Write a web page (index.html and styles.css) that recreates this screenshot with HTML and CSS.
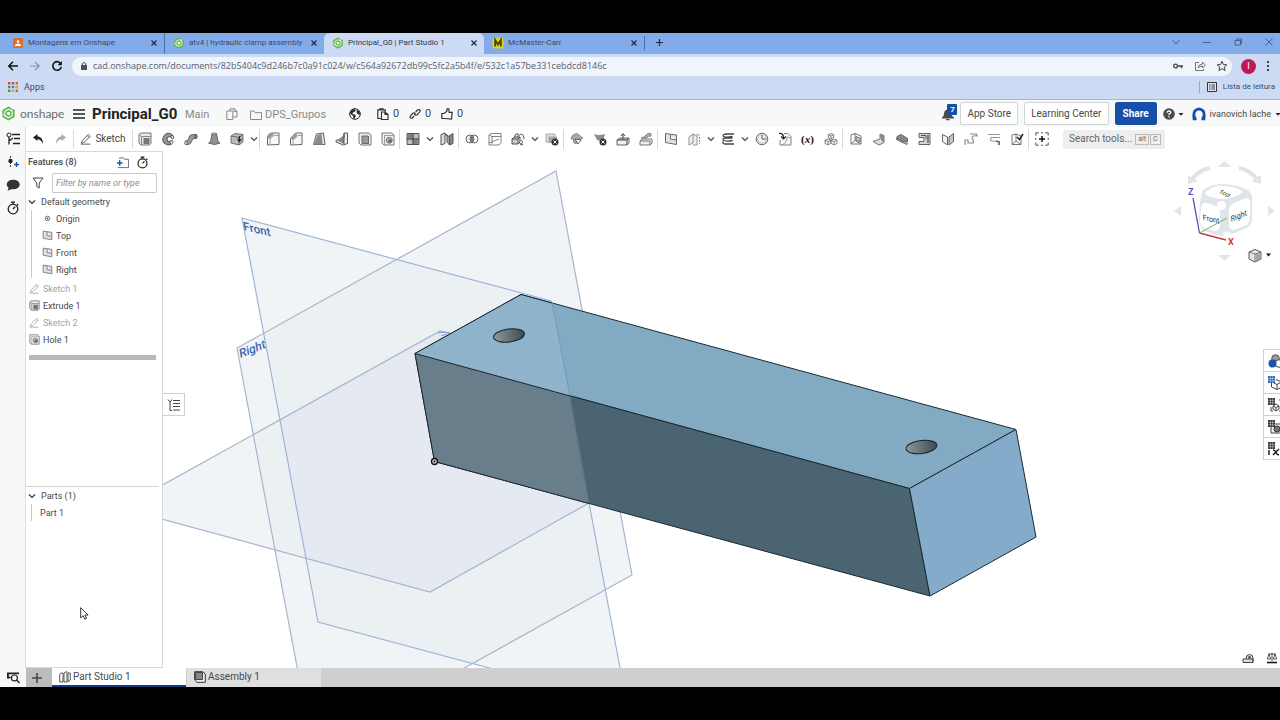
FILE: index.html
```html
<!DOCTYPE html>
<html lang="en">
<head>
<meta charset="utf-8">
<title>Principal_G0 | Part Studio 1</title>
<link rel="stylesheet" href="styles.css">
</head>
<body>
<svg class="defs" aria-hidden="true">
  <defs>
    <linearGradient id="hole" x1="0" y1="0" x2="1" y2="0"><stop offset="0" stop-color="#8f9899"/><stop offset="1" stop-color="#3c4a50"/></linearGradient>
    <clipPath id="inRight"><path d="M556 171 632 575 313 752 237 348z"/></clipPath>
    <clipPath id="inFront"><path d="M242 218 551 301 627 705 318 622z"/></clipPath>
    <symbol id="logo" viewBox="0 0 16 16"><path d="M8 .5 14.500 4.200v7.600L8 15.500 1.500 11.800V4.200z" fill="#5cb548"/><path d="M8 3.400 12 5.700v4.600L8 12.600 4 10.300V5.700z" fill="none" stroke="#fff" stroke-width="1.100"/><path d="M8 6 9.800 7v2L8 10 6.200 9V7z" fill="#fff"/><path d="M1.500 9 7 12.300M11.500 2v4" stroke="#fff" stroke-width=".8"/></symbol>
    <symbol id="close" viewBox="0 0 8 8"><path d="M1.500 1.500l5 5M6.500 1.500l-5 5" stroke="currentColor" stroke-width="1.200" fill="none"/></symbol>
    <symbol id="chev" viewBox="0 0 8 8"><path d="M1 2.500 4 5.500 7 2.500" stroke="currentColor" stroke-width="1.200" fill="none"/></symbol>
    <symbol id="caret" viewBox="0 0 8 8"><path d="M1.500 3h5L4 5.800z" fill="currentColor"/></symbol>
    <symbol id="pencil" viewBox="0 0 14 14"><path d="M1.500 12 3 8.500 9.800 1.500 12 3.700 5 10.800zM8.400 3l2.200 2.200M1 13h11" fill="none" stroke="currentColor"/></symbol>
    <symbol id="plane" viewBox="0 0 14 14"><path d="M1.500 1.500 12.500 3v9.500L1.500 10.500z" fill="#dfe1e3" stroke="#6b6b6b"/><path d="M6.500 2.500v4.700l6 .8" fill="#f4f4f4" stroke="#6b6b6b"/></symbol>
    <symbol id="extrude" viewBox="0 0 14 14"><path d="M1 2.500 2.500 1H13v10.500L11.500 13H3L1 11z" fill="#e8e8e8" stroke="#777"/><path d="M1 2.500 3.500 4.500H13M3.500 4.500V13" fill="none" stroke="#888"/><path d="M5.500 6h6v6h-6z" fill="#777"/></symbol>
    <symbol id="holeicon" viewBox="0 0 14 14"><path d="M1 1h10l2 2v10H3L1 11z" fill="#f2f2f2" stroke="#777"/><path d="M3.500 3.500V13M3.500 3.500H13" stroke="#888" stroke-width=".8"/><circle cx="8.300" cy="8.300" r="3" fill="#b5b5b5" stroke="#777"/><circle cx="9" cy="9" r="1.800" fill="#666"/></symbol>
    <symbol id="stopwatch" viewBox="0 0 14 14"><circle cx="7" cy="8" r="4.800" fill="none" stroke="currentColor" stroke-width="1.300"/><path d="M5 1.200h4M7 1v2M11 3l1.200 1.200M7 8l2.200-2.200" fill="none" stroke="currentColor" stroke-width="1.300"/></symbol>
    <symbol id="grid" viewBox="0 0 8 8"><path d="M0 0h7v7H0z" fill="currentColor"/><path d="M0 2.400h7M0 4.700h7M2.400 0v7M4.700 0v7" stroke="#fff" stroke-width=".4"/></symbol>
  </defs>
</svg>

<div class="browser">
  <nav class="tabstrip" aria-label="Browser tabs">
    <div class="btab"><svg class="fav" viewBox="0 0 12 12"><rect x="1" y="1" width="10" height="10" rx="1.500" fill="#d9702b"/><circle cx="6" cy="4.500" r="1.300" fill="#fff"/><path d="M3 9V8q3-3 6 0v1z" fill="#fff"/></svg><button class="btab-name">Montagens em Onshape</button><button class="x" aria-label="Close tab"><svg><use href="#close"/></svg></button></div>
    <div class="btab rule"><svg class="fav"><use href="#logo"/></svg><button class="btab-name">atv4 | hydraulic clamp assembly</button><button class="x" aria-label="Close tab"><svg><use href="#close"/></svg></button></div>
    <div class="btab current"><svg class="fav"><use href="#logo"/></svg><button class="btab-name">Principal_G0 | Part Studio 1</button><button class="x" aria-label="Close tab"><svg><use href="#close"/></svg></button></div>
    <div class="btab"><svg class="fav" viewBox="0 0 12 12"><rect x=".5" y=".5" width="11" height="11" rx="2" fill="#e3d21e"/><path d="M3.200 9.500V3L6 7.500 8.800 3v6.500" fill="none" stroke="#3c4a10" stroke-width="1.900"/></svg><button class="btab-name">McMaster-Carr</button><button class="x" aria-label="Close tab"><svg><use href="#close"/></svg></button></div>
    <button class="newtab" aria-label="New tab"><svg viewBox="0 0 10 10"><path d="M5 1v8M1 5h8" stroke="#1d2b45" stroke-width="1.300"/></svg></button>
    <div class="winctl">
      <button aria-label="Search tabs"><svg viewBox="0 0 10 10"><path d="M1.500 3 5 7l3.500-4" /></svg></button>
      <button aria-label="Minimise"><svg viewBox="0 0 10 10"><path d="M1 5.500h8"/></svg></button>
      <button aria-label="Restore"><svg viewBox="0 0 10 10"><path d="M2 3.500h5.500V8H2zM3.500 3.500V2h5v4.500h-1"/></svg></button>
      <button aria-label="Close"><svg viewBox="0 0 10 10"><path d="M1.500 1.500l7 7M8.500 1.500l-7 7"/></svg></button>
    </div>
  </nav>
  <div class="address">
    <button aria-label="Back"><svg viewBox="0 0 12 12"><path d="M11 6H2M6 1.800 1.800 6 6 10.200" fill="none" stroke="#111" stroke-width="1.500"/></svg></button>
    <button aria-label="Forward"><svg viewBox="0 0 12 12"><path d="M1 6h9M6 1.800 10.200 6 6 10.200" fill="none" stroke="#8391a8" stroke-width="1.200"/></svg></button>
    <button aria-label="Reload"><svg viewBox="0 0 12 12"><path d="M10 4A4.300 4.300 0 1 0 10.300 7" fill="none" stroke="#111" stroke-width="1.600"/><path d="M10.800 1v4.200H6.600z" fill="#111"/></svg></button>
    <div class="omnibox">
      <svg class="lock" viewBox="0 0 8 10"><path d="M1 4h6v5H1z" fill="#4a505c"/><path d="M2.300 4V2.500q1.700-2 3.400 0V4" fill="none" stroke="#4a505c"/></svg>
      <input class="url" aria-label="Address" value="cad.onshape.com/documents/82b5404c9d246b7c0a91c024/w/c564a92672db99c5fc2a5b4f/e/532c1a57be331cebdcd8146c">
      <button aria-label="Passwords"><svg viewBox="0 0 12 12"><circle cx="3.500" cy="6" r="1.900" fill="none" stroke="#444" stroke-width="1.300"/><path d="M5.500 6H11M9.500 6v2.300" stroke="#444" stroke-width="1.400"/></svg></button>
      <button aria-label="Share page"><svg viewBox="0 0 12 12"><path d="M5 2.500H1.500v8h8V9M4 8q.5-4 4.500-4V2l2.700 3L8.500 8V6Q6 5.800 4 8z" fill="none" stroke="#666" stroke-width=".9"/></svg></button>
      <button aria-label="Bookmark"><svg viewBox="0 0 12 12"><path d="M6 1.200 7.400 4.500l3.500.3-2.700 2.300.9 3.500L6 8.700l-3.100 1.900.9-3.500L1.100 4.800l3.500-.3z" fill="none" stroke="#444"/></svg></button>
    </div>
    <button class="profile" aria-label="Profile">I</button>
    <button class="dots" aria-label="Menu"><svg viewBox="0 0 4 12"><circle cx="2" cy="2" r="1.100"/><circle cx="2" cy="6" r="1.100"/><circle cx="2" cy="10" r="1.100"/></svg></button>
  </div>
  <div class="bookmarks">
    <a href="#apps"><svg viewBox="0 0 10 10"><path d="M0 0h2.400v2.400H0zM3.800 0h2.400v2.400H3.800z" fill="#d4483c"/><path d="M7.600 0H10v2.400H7.600zM7.600 7.600H10V10H7.600z" fill="#cc6a35"/><path d="M0 3.800h2.400v2.400H0z" fill="#45935a"/><path d="M3.800 3.800h2.400v2.400H3.800z" fill="#3e78d0"/><path d="M7.600 3.800H10v2.400H7.600zM3.800 7.600h2.400V10H3.800z" fill="#d8a728"/><path d="M0 7.600h2.400V10H0z" fill="#45935a"/></svg>Apps</a>
    <a href="#list" class="reading"><svg viewBox="0 0 10 10"><path d="M.5.5h9v9h-9z" fill="#e0e8f5" stroke="#333"/><path d="M2 3h1.500M4.500 3H8M2 5h1.500M4.500 5H8M2 7h1.500M4.500 7H8" stroke="#333"/></svg>Lista de leitura</a>
  </div>
</div>

<header class="appbar">
  <a class="brand" href="#home"><svg><use href="#logo"/></svg>onshape</a>
  <button class="menu" aria-label="Menu"><svg viewBox="0 0 12 12"><path d="M0 2h12M0 6h12M0 10h12" stroke="#222" stroke-width="1.700"/></svg></button>
  <h1>Principal_G0</h1>
  <span class="branch">Main</span>
  <button class="copy" aria-label="Copy"><svg viewBox="0 0 12 12"><path d="M.8 3h6v8.500h-6zM4 3V.8h4.500L11 3.300V9H7M8.200 1v2.600H11" fill="none" stroke="#888"/></svg></button>
  <a class="folder" href="#folder"><svg viewBox="0 0 12 12"><path d="M.5 10.500v-8.500H4l1.200 1.700h6.300v6.800z" fill="none" stroke="#888"/></svg>DPS_Grupos</a>
  <svg class="globe" viewBox="0 0 12 12"><circle cx="6" cy="6" r="5.300" fill="#fff" stroke="#222"/><path d="M1 4Q2 1 5 .8l2 1.400L5.500 4 4 4.500 3.300 6l2.700.6.900 1.200L5.500 11 4 9.500V8L1 5.500zM8 1.500 10.500 3.500l.8 3L10 6.800 8 5.500 7.500 4z" fill="#333"/></svg>
  <span class="stat"><svg viewBox="0 0 12 12"><path d="M4 10.500H.8V1.800h7.400V4M2.800 2.500V.8h3.300v1.700M4.500 4H8l3 2.500v5H4.500zM8 4v2.500h3" fill="none" stroke="#333" stroke-width="1.200"/></svg>0</span>
  <span class="stat"><svg viewBox="0 0 12 12"><path d="M5.200 7.800 3.500 9.900Q1.500 11 1 8.800L3.600 5.400Q5.400 4 6.600 6M6.600 4.200 8.400 2Q10.500.8 11.200 3L8.500 6.500Q6.500 8 5.300 6" fill="none" stroke="#333" stroke-width="1.200"/></svg>0</span>
  <span class="stat"><svg viewBox="0 0 12 12"><path d="M.8 5.500h2.500L6 3V.8h1.800l.4 3.500h3L10.500 11 4 10.500H.8z" fill="none" stroke="#333" stroke-width="1.200"/></svg>0</span>
  <div class="account">
    <button class="bell" aria-label="Notifications"><svg viewBox="0 0 14 14"><path d="M1 11q2-1 2-4 .5-4 4-4 3 0 3.500 4 0 3 2.500 4v1H1zM5 12.500h3.500v1.200H5z" fill="#4a4a4a"/></svg><span>7</span></button>
    <button class="btn">App Store</button>
    <button class="btn">Learning Center</button>
    <button class="btn share">Share</button>
    <button class="help" aria-label="Help"><svg viewBox="0 0 12 12"><circle cx="6" cy="6" r="5.800" fill="#4b4b4b"/><path d="M4.200 4.800Q4.300 3 6 3t1.800 1.500Q7.800 5.500 6 6.200v1M6 8.200v1.300" fill="none" stroke="#fff" stroke-width="1.300"/></svg><svg class="car"><use href="#caret"/></svg></button>
    <button class="user"><svg viewBox="0 0 16 16"><path d="M1 15Q-.500 7 2 3.500 8-2.500 14 3.500 16.500 7 15 15h-4q-.5-1.500-.2-2.500Q12.500 11 12.200 8 12 4 8 4T3.800 8q-.3 3 1.400 4.500Q5.500 13.500 5 15z" fill="#1650a5"/></svg>ivanovich lache<svg class="car"><use href="#caret"/></svg></button>
  </div>
</header>

<div class="work">
  <aside class="rail">
    <button aria-label="Feature list"><svg viewBox="0 0 14 14"><circle cx="3" cy="3" r="2" fill="none" stroke="#222"/><path d="M3 5v7.500M3 9l4-3M6 2.500h8M8 6.500h6M7 11.500h7" fill="none" stroke="#222" stroke-width="1.300"/></svg></button>
    <button aria-label="Insert"><svg viewBox="0 0 14 14"><path d="M4.500 1v12" stroke="#444" stroke-dasharray="2 1"/><circle cx="4.500" cy="6" r="2.200" fill="#222"/><path d="M8 9.500h5M10.500 7v5" stroke="#1a4fa8" stroke-width="1.400"/></svg></button>
    <button aria-label="Comments"><svg viewBox="0 0 14 14"><ellipse cx="7.200" cy="6.500" rx="6.500" ry="4.800" fill="#333"/><path d="M3 9 1.500 12.800 7 10.500z" fill="#333"/></svg></button>
    <button aria-label="History"><svg><use href="#stopwatch"/></svg></button>
  </aside>

  <div class="main">
    <div class="toolbar" role="toolbar">
      <button class="t" aria-label="Undo"><svg viewBox="0 0 14 14"><path d="M2 5.500 6.500 2v2.300Q12 5 12 12 10 7.500 6.500 7.300V9z" fill="#222"/></svg></button>
      <button class="t" aria-label="Redo"><svg viewBox="0 0 14 14"><path d="M12 5.500 7.500 2v2.300Q2 5 2 12 4 7.500 7.500 7.300V9z" fill="#aaa"/></svg></button>
      <button class="sketch"><svg><use href="#pencil"/></svg>Sketch</button>
      <div class="g">
        <button class="t"><svg><use href="#extrude"/></svg></button>
        <button class="t"><svg viewBox="0 0 14 14"><path d="M12 3.500Q8-.500 4 2.500 0 7 3 11q3 3 7 1.500L8.500 9.500Q6 10 6 7t3-2z" fill="#969696" stroke="#555"/><path d="M9.500 4.200 12 3.500l1 2.500-2 1zM8.500 9l3-.5.500 2-2 2z" fill="#eee" stroke="#444" stroke-width=".8"/></svg></button>
        <button class="t"><svg viewBox="0 0 14 14"><path d="M1.500 9Q4 9.500 4.500 6.500 5 2.500 9 2.500h3.500v4H10q-1.500 0-2 2Q7 13 2 12.700z" fill="#9a9a9a" stroke="#666"/><ellipse cx="2" cy="10.800" rx="1.300" ry="1.900" fill="#ddd" stroke="#555" stroke-width=".8"/><ellipse cx="12" cy="4.500" rx="1.200" ry="2" fill="#888" stroke="#555" stroke-width=".8"/></svg></button>
        <button class="t"><svg viewBox="0 0 14 14"><path d="M5 1.500h4.500l1.500 8L13 11q-5 3-11.500 0L3.700 9.500z" fill="#929292" stroke="#666"/><ellipse cx="7.200" cy="2" rx="2.300" ry="1" fill="#ccc" stroke="#555" stroke-width=".7"/></svg></button>
        <button class="t"><svg viewBox="0 0 14 14"><path d="M1 4 5 1.500l8 1v7.500L9 13l-8-2z" fill="#bbb" stroke="#555" stroke-width=".8"/><path d="M1 4l8 1.500L13 2.500M9 5.500V13" fill="none" stroke="#555" stroke-width=".8"/><path d="M9.500 4v5M7.500 7l2 2.500 2-2.500" fill="none" stroke="#222" stroke-width="1.200"/></svg></button><button class="c"><svg><use href="#chev"/></svg></button>
      </div>
      <div class="g">
        <button class="t"><svg viewBox="0 0 14 14"><path d="M1.500 13V5.500q.5-4 4-4.500H13v11.500z" fill="#f8f8f8" stroke="#666"/><path d="M4 12.500V8q.5-4 4.500-4.500H13" fill="none" stroke="#888" stroke-width=".8"/><path d="M1.500 6q.5-4.500 5-5L8 3Q4.500 4 4 7z" fill="#999"/></svg></button>
        <button class="t"><svg viewBox="0 0 14 14"><path d="M1.500 13V6.500L6.500 1H13v11.500z" fill="#f8f8f8" stroke="#666"/><path d="M1.500 6.500 6.500 1 8.500 3.200 4 8z" fill="#999"/><path d="M4 12.500v-4l5-5h4" fill="none" stroke="#888" stroke-width=".8"/></svg></button>
        <button class="t"><svg viewBox="0 0 14 14"><path d="M1.500 12.500 4.500 2l7-1 1.500 11.500z" fill="#e4e4e4" stroke="#666"/><path d="M2 12.500 5.500 3 9.500 2l1 10.500z" fill="#8a8a8a"/></svg></button>
        <button class="t"><svg viewBox="0 0 14 14"><path d="M1 8.500 9 6V1h3.500v10.500l-4 1.500-7.500-3z" fill="#eee" stroke="#555"/><path d="M2 8.500 9 3v9z" fill="#888"/><path d="M9 1v11" stroke="#555"/></svg></button>
        <button class="t"><svg viewBox="0 0 14 14"><path d="M1 1h10l2 2v10H3l-2-2z" fill="#f0f0f0" stroke="#777"/><path d="M4 4h6.500v7.500H4z" fill="#999" stroke="#666"/></svg></button>
        <button class="t"><svg><use href="#holeicon"/></svg></button>
      </div>
      <div class="g">
        <button class="t"><svg viewBox="0 0 14 14"><path d="M1 1.500h12v11H1z" fill="#bdbdbd" stroke="#555"/><path d="M1.500 2h5v4.500h-5zM7.500 7.500h5V12h-5z" fill="#828282"/><path d="M7 1.500v11M1 7h12" stroke="#333"/></svg></button><button class="c"><svg><use href="#chev"/></svg></button>
        <button class="t"><svg viewBox="0 0 14 14"><path d="M1 2.500 5 1v10.500L1 13z" fill="#ddd" stroke="#555"/><path d="M9.500 3.500 13 1.500v10L9.500 13z" fill="#888" stroke="#555"/><path d="M5 1.500 7 4v6l2.500 3V5L5 1.500z" fill="#aaa" stroke="#555"/></svg></button>
      </div>
      <div class="g">
        <button class="t"><svg viewBox="0 0 14 14"><circle cx="5" cy="7" r="4" fill="#eee" stroke="#555" stroke-width=".9"/><circle cx="9" cy="7" r="4" fill="none" stroke="#555" stroke-width=".9"/><path d="M7 3.600a4 4 0 0 1 0 6.800 4 4 0 0 1 0-6.800z" fill="#777"/></svg></button>
        <button class="t"><svg viewBox="0 0 14 14"><path d="M1 3 3 1.500h10v9L11 13H1zM1 3l3 1.500h9M1 11l10-4M4 4.500V12" fill="none" stroke="#777" stroke-width=".9"/></svg></button>
        <button class="t"><svg viewBox="0 0 14 14"><path d="M1 7h6v5H1zM1 7l2-2h6L7 7M9 5v5l-2 2" fill="#ccc" stroke="#444" stroke-width=".9"/><path d="M4 5V3l3-1.500V5M8 3.500Q11 .5 12.500 4l.5 3M10 8q3 1 0 4.500M9 11l1 2 2-.5" fill="none" stroke="#444" stroke-width=".9"/></svg></button><button class="c"><svg><use href="#chev"/></svg></button>
        <button class="t"><svg viewBox="0 0 14 14"><path d="M1 2h9v8H1z" fill="#ddd" stroke="#aaa"/><path d="M3.500 4.500H12V11H3.500z" fill="#a5a5a5"/><circle cx="10" cy="10" r="3.500" fill="#333"/><path d="M8.500 8.500l3 3m0-3l-3 3" stroke="#fff"/></svg></button>
      </div>
      <div class="g">
        <button class="t"><svg viewBox="0 0 14 14"><path d="M1 7q1-5 6-5.500L13 6 10 8 9 6.500 6 12 3.500 10.500V7z" fill="#aaa" stroke="#777" stroke-width=".8"/><path d="M5 7l6 1-3 4z" fill="#fff" stroke="#444" stroke-width=".8"/></svg></button>
        <button class="t"><svg viewBox="0 0 14 14"><path d="M1 2q5 2 11 0l-2 7q-4 0-6-1z" fill="#8e8e8e"/><circle cx="10" cy="10" r="3.500" fill="#333"/><path d="M8.500 8.500l3 3m0-3l-3 3" stroke="#fff"/></svg></button>
        <button class="t"><svg viewBox="0 0 14 14"><path d="M1 8 4 6h9v4.500L11 13H1z" fill="#eee" stroke="#555" stroke-width=".9"/><path d="M2 8 4.500 6h7L10 8z" fill="#999"/><path d="M1 8h10l2-2M11 8v5M7 7V2M5 4l2-2.500L9 4" fill="none" stroke="#444"/></svg></button>
        <button class="t"><svg viewBox="0 0 14 14"><path d="M1 9h10v4H1zM1 9l2-2h10v4l-2 2" fill="#eee" stroke="#666" stroke-width=".9"/><path d="M2 6q4-1 5-3t5-1.500v2.500Q9 4 7.500 6z" fill="#aaa" stroke="#777" stroke-width=".8"/></svg></button>
      </div>
      <div class="g">
        <button class="t"><svg><use href="#plane"/></svg></button>
        <button class="t"><svg viewBox="0 0 14 14"><path d="M2 5 6 2v9l-4 2zM6 2l4 2v9H6" fill="#eee" stroke="#888" stroke-width=".9"/><path d="M9.500 3 11 1.500 12.500 5v7" fill="none" stroke="#888" stroke-dasharray="2 1"/></svg></button><button class="c"><svg><use href="#chev"/></svg></button>
        <button class="t"><svg viewBox="0 0 14 14"><path d="M13 2H5Q1 2.500 2.500 4.500q3 1.500 9 0M11.500 6H4q-3 .8-1.500 2.500 4 1.200 9 0M13 12H3.500Q.500 11 2.500 9.500" fill="none" stroke="#444" stroke-width="1.300"/></svg></button><button class="c"><svg><use href="#chev"/></svg></button>
        <button class="t"><svg viewBox="0 0 14 14"><circle cx="7" cy="7" r="5.800" fill="#f3f3f3" stroke="#666"/><circle cx="7" cy="7" r="4.300" fill="none" stroke="#999" stroke-width=".6"/><path d="M7 3v4h4" fill="none" stroke="#555"/></svg></button>
        <button class="t"><svg viewBox="0 0 14 14"><path d="M6 1.500h4l3 3V13H2V8" fill="#f6f6f6" stroke="#777" stroke-width=".9"/><path d="M4 13q5-2 5-8l4 1" fill="none" stroke="#888" stroke-width=".8"/><path d="M1 1.500q5-.5 4.500 5M3 4.500l2.500 2.500L8 4.500" fill="none" stroke="#222" stroke-width="1.200"/></svg></button>
        <button class="t varx">(<i>x</i>)</button>
        <button class="t"><svg viewBox="0 0 14 14"><path d="M7 1.500l2.600 1.200v3L7 7 4.400 5.700v-3zM4 7l2.700 1.200v3L4 12.800 1 11.500V8.300zM10 7l3 1.200v3.300l-3 1.300-3-1.500V8.300zM4.400 2.700 7 4l2.600-1.300M7 4v3M1 8.300l3 1.200 3-1.200 3 1.200 3-1.200M4 9.500v3M10 9.500v3" fill="none" stroke="#666" stroke-width=".8"/></svg></button>
      </div>
      <div class="g">
        <button class="t"><svg viewBox="0 0 14 14"><path d="M2 3 6 1.500 12 4v8H2zM2 12l4-3.500V1.500M6 8.500 12 12" fill="none" stroke="#666" stroke-width=".9"/><path d="M7 4.500l4 1.500v4L7 8z" fill="#ccc" stroke="#555" stroke-width=".8"/></svg></button>
        <button class="t"><svg viewBox="0 0 14 14"><path d="M1 9.500 8 7V2l4 1.500v7L7 13z" fill="#ddd" stroke="#666" stroke-width=".9"/><path d="M8 2l4 1.500v7L9 8z" fill="#888"/></svg></button>
        <button class="t"><svg viewBox="0 0 14 14"><path d="M1 7 5 9.500 12 12.500V9L6 5z" fill="#ddd" stroke="#555" stroke-width=".9"/><path d="M2 4.500 6 2.500l6.500 4V9L9 10 2 6.500z" fill="#888" stroke="#555" stroke-width=".9"/></svg></button>
        <button class="t"><svg viewBox="0 0 14 14"><path d="M1 1.500h11v11H1v-3h5v-4H1z" fill="#d5d5d5" stroke="#555" stroke-width=".9"/><path d="M9 3h2v8H9z" fill="#808080"/><path d="M3 3.500h5V7" fill="none" stroke="#555"/></svg></button>
        <button class="t"><svg viewBox="0 0 14 14"><path d="M1.500 2.500 6.500 5v8l-5-3.500z" fill="#f2f2f2" stroke="#555" stroke-width=".9"/><path d="M12.500 1.500 8 5v8l4.500-3.500z" fill="#c5c5c5" stroke="#555" stroke-width=".9"/></svg></button>
        <button class="t"><svg viewBox="0 0 14 14"><path d="M6 2h7M13 2v2Q8 3 8 6q2 2 1 5H4V8H1v5" fill="none" stroke="#888" stroke-width="1.100"/></svg></button>
        <button class="t"><svg viewBox="0 0 14 14"><path d="M1 2.500h12M13 5.500H4.500q-2 2 0 3.500H11v4" fill="none" stroke="#999" stroke-width="1.200"/><path d="M9 9.500h3.500V13" fill="none" stroke="#555"/></svg></button>
        <button class="t"><svg viewBox="0 0 14 14"><path d="M2 3l4-1 5 2v8.500H2zM2 12.500l4-3.500V2M6 9l5 3.500" fill="none" stroke="#666" stroke-width=".9"/><path d="M7 5l2.500 2.500L13 2" fill="none" stroke="#222" stroke-width="1.500"/></svg></button>
      </div>
      <div class="g">
        <button class="t"><svg viewBox="0 0 14 14"><path d="M.8 3.500V.8h3M10.200.8h3v2.700M13.200 10.500v2.700h-3M3.800 13.200h-3v-2.700M6 .8h2M6 13.200h2M.8 6v2M13.200 6v2" fill="none" stroke="#555"/><path d="M7 4v6M4 7h6" stroke="#111" stroke-width="1.500"/></svg></button>
      </div>
      <button class="search">Search tools...<kbd>alt</kbd><kbd>C</kbd></button>
    </div>

    <div class="stage">
      <section class="panel">
        <div class="phead"><h2>Features (8)</h2><button aria-label="New folder"><svg viewBox="0 0 14 14"><path d="M4 3V2h4l1 1.500h4.500v9H2" fill="none" stroke="#5a6b85"/><path d="M1 7.500h6M4 4.500v6" stroke="#1a4fa8" stroke-width="1.500"/></svg></button><button class="sw" aria-label="Performance"><svg><use href="#stopwatch"/></svg></button></div>
        <div class="filter"><svg viewBox="0 0 12 12"><path d="M1 1h10L7.200 6v5L4.800 9.500V6z" fill="none" stroke="#444"/></svg><input aria-label="Filter features" placeholder="Filter by name or type"></div>
        <div class="row head"><svg><use href="#chev"/></svg>Default geometry</div>
        <ul class="sub">
          <li><svg viewBox="0 0 12 12"><circle cx="6" cy="6" r="2.500" fill="none" stroke="#666"/><circle cx="6" cy="6" r="1" fill="#444"/></svg>Origin</li>
          <li><svg><use href="#plane"/></svg>Top</li>
          <li><svg><use href="#plane"/></svg>Front</li>
          <li><svg><use href="#plane"/></svg>Right</li>
        </ul>
        <ul class="feats">
          <li class="off"><svg><use href="#pencil"/></svg>Sketch 1</li>
          <li><svg><use href="#extrude"/></svg>Extrude 1</li>
          <li class="off"><svg><use href="#pencil"/></svg>Sketch 2</li>
          <li><svg><use href="#holeicon"/></svg>Hole 1</li>
        </ul>
        <div class="rollback"></div>
        <div class="parts">
          <div class="row head"><svg><use href="#chev"/></svg>Parts (1)</div>
          <ul class="sub"><li>Part 1</li></ul>
        </div>
      </section>

      <div class="canvas">
        <svg class="scene" viewBox="163 151 1117 517" preserveAspectRatio="xMinYMin meet" role="img" aria-label="3D model">
          <g fill="#f0f4f6">
            <path d="M121 508 440 331 748 414 430 592z"/>
            <path d="M556 171 632 575 313 752 237 348z"/>
            <path d="M242 218 551 301 627 705 318 622z"/>
          </g>
          <g clip-path="url(#inRight)">
            <path d="M242 218 551 301 627 705 318 622zM121 508 440 331 748 414 430 592z" fill="#ebf0f3"/>
            <path d="M121 508 440 331 748 414 430 592z" fill="#e5e9f2" clip-path="url(#inFront)"/>
          </g>
          <g fill="none" stroke="#a9b5cc" stroke-width="1.200">
            <path d="M121 508 440 331 748 414 430 592z"/>
            <path d="M556 171 632 575 313 752 237 348z"/>
            <path d="M242 218 551 301 627 705 318 622z" stroke="#a0b5d6"/>
          </g>
          <g class="planename">
            <text transform="matrix(.97 .23 .19 .98 244 230)">Front</text>
            <text transform="matrix(.92 -.36 .15 1 240 358)">Right</text>
          </g>
          <path d="M438 333l6-1 6 1M441 336l6-2" fill="none" stroke="#7f9bd0"/>
          <g stroke="#1c2a33" stroke-linejoin="round">
            <path d="M415 353.500 521 294.500 1016 429.500 909.500 488.500z" fill="#82aac3"/>
            <path d="M415 353.500 909.500 488.500 930 596 434.500 461.500z" fill="#4b6472"/>
            <path d="M909.500 488.500 1016 429.500 1036 537 930 596z" fill="#84abc9"/>
          </g>
          <path d="M415 353.500 521 294.500 552 303 570 396z" fill="#8fb3ca"/>
          <path d="M415 353.500 570 396 589 503.500 434.500 461.500z" fill="#687e8b"/>
          <path d="M552 302 570 396" stroke="#6b9cc5" fill="none"/>
          <path d="M570 396 589 503" stroke="#52738c" fill="none"/>
          <path d="M552 303 521 294.500 415 353.500 570 396M415 353.500 434.500 461.500 589 503.500" fill="none" stroke="#1c2a33"/>
          <g fill="url(#hole)" stroke="#18262e"><ellipse cx="509" cy="335.500" rx="15.500" ry="6.500" transform="rotate(-7 509 335.500)"/><ellipse cx="921.500" cy="447" rx="15.500" ry="6.500" transform="rotate(-7 921.500 447)"/></g>
          <circle cx="434.500" cy="461.500" r="3" fill="#ccd3d6" stroke="#111" stroke-width="1.300"/><circle cx="434.500" cy="461.500" r="1" fill="#111"/>
        </svg>
        <svg class="cube" viewBox="1160 151 120 120" role="img" aria-label="View cube">
          <path fill="#e2e4e5" d="M1218 167l6.500-6 6.500 6zM1218 255h13l-6.500 6zM1181 206v10l-7-5zM1268 206v10l7-5zM1188 175v9l10-3zM1261 175v9l-10-3z"/>
          <path d="M1192 179Q1199 170 1210 168M1257 179Q1250 170 1239 168" fill="none" stroke="#e0e4ea" stroke-width="4"/>
          <path d="M1203 190q8-6 20-6 18 1 26 7 4 3 3 12v17q-1 7-8 9l-17 7q-13 0-24-6-4-4-4-12 1-22 4-28z" fill="#e0e4ec"/>
          <path d="M1207 191q7-6 17-5 14 1 19 6-6 5-17 7-13 0-20-4-2-2 1-4z" fill="#fff"/>
          <path d="M1201 208q1-6 6-5l9 3q4 2 4 6v14q-1 6-6 5l-10-3q-4-2-4-7z" fill="#fff"/>
          <path d="M1229 209q1-4 5-6l12-5q4 0 4 4v17q-1 5-5 7l-11 4q-4 0-5-5z" fill="#fff"/>
          <circle cx="1221.500" cy="205.500" r="4.500" fill="#fff"/><ellipse cx="1227" cy="234" rx="4" ry="2.500" fill="#fff"/>
          <path d="M1199.500 233 1193 198" stroke="#4b51b5" stroke-width="1.300"/><path d="M1199.500 233 1226 240" stroke="#c33c42" stroke-width="1.300"/><path d="M1199.500 233 1227 218" stroke="#6fb66f"/>
          <g class="cubename"><text transform="matrix(.8 .3 -.5 .6 1218 193)">Top</text><text transform="matrix(.9 .2 .1 1 1203 220)">Front</text><text transform="matrix(.88 -.36 .1 1 1231 222)">Right</text></g>
          <text class="axis z" x="1188" y="195">Z</text><text class="axis xx" x="1228" y="245">X</text>
          <path d="M1249 252l6-2.500 6 2.500v7l-6 3-6-3z" fill="#e4e4e4" stroke="#333" stroke-width=".8"/><path d="M1249 252l6 2 6-2M1255 254v8" fill="none" stroke="#666" stroke-width=".8"/><path d="M1255.500 254.500l5-2v6l-5 3z" fill="#a5a5a5"/>
          <path d="M1266 253.500h5l-2.500 3z" fill="#111"/>
        </svg>
        <button class="toggle" aria-label="Toggle feature list"><svg viewBox="0 0 14 14"><path d="M1 1.500 3 4l2-2.500M3 3v9.500M3 12.500h2M6 2.500h7M6 5.500h7M6 8.500h7M6 12h7" fill="none" stroke="#444"/></svg></button>
        <div class="side">
          <button aria-label="Appearance"><svg viewBox="0 0 14 14"><circle cx="7.500" cy="4.500" r="3.800" fill="#999" stroke="#555"/><circle cx="11" cy="9.500" r="3.800" fill="#fff" stroke="#444"/><circle cx="4.500" cy="9.500" r="4" fill="#1e53a5"/></svg></button>
          <button aria-label="Configurations"><svg viewBox="0 0 14 14"><path d="M8 3.500 13.500 6v5L9 13.500 3.500 11V7M4 6l5 2.500L13.500 6M9 8.500v5" fill="none" stroke="#444"/><use href="#grid" width="8" height="8" color="#2b68b5"/></svg></button>
          <button aria-label="Custom table"><svg viewBox="0 0 14 14"><path d="M3 9v4h2M11 2h2v11h-2M5 8l3-2 3 2v3l-3 2-3-2zM5 8l3 1.500L11 8M8 9.500V13" fill="none" stroke="#444"/><use href="#grid" width="8" height="8" color="#333"/></svg></button>
          <button aria-label="Hole table"><svg viewBox="0 0 14 14"><path d="M3 4h11v9H3z" fill="#eee" stroke="#444"/><circle cx="9" cy="9" r="3" fill="#777" stroke="#333"/><use href="#grid" width="8" height="8" color="#333"/></svg></button>
          <button aria-label="Variable table"><svg viewBox="0 0 14 14"><path d="M1 8v5M5 8q2 0 3 2.500T11 13M11 7 5 13M13 4v9" fill="none" stroke="#222" stroke-width="1.500"/><use href="#grid" width="8" height="8" color="#333"/></svg></button>
        </div>
        <div class="measure">
          <button aria-label="Measure"><svg viewBox="0 0 12 12"><path d="M1 7h10v3.500H1zM4 6.500q0-4 3.500-4T11 6v4" fill="#ddd" stroke="#444"/><circle cx="7.500" cy="5.500" r="1.400" fill="#555"/></svg></button>
          <button aria-label="Mass properties"><svg viewBox="0 0 12 12"><path d="M2 2h8M6 1v8M3 2 1.200 7h3.600zM9 2 7.200 7h3.600z" fill="none" stroke="#444" stroke-width=".9"/><path d="M1 10.500h10" stroke="#111" stroke-width="1.600"/></svg></button>
        </div>
      </div>
    </div>
  </div>
</div>

<footer class="tabs">
  <button class="find" aria-label="Tab manager"><svg viewBox="0 0 14 14"><path d="M1 8V2.500h12" fill="none" stroke="#222" stroke-width="2"/><circle cx="8" cy="7.500" r="3.200" fill="#fff" stroke="#222" stroke-width="1.300"/><path d="M10.500 10l3 3M1 7h3" stroke="#222" stroke-width="1.500"/></svg></button>
  <button class="add" aria-label="Add tab"><svg viewBox="0 0 10 10"><path d="M5 0v10M0 5h10" stroke="#444" stroke-width="1.600"/></svg></button>
  <button class="dtab on"><svg viewBox="0 0 12 12"><path d="M.7 3.500 2 2h2v9H.7zM5 11V2l2-1.200h1V11zM9 2h2.300v7L9 11z" fill="none" stroke="#444" stroke-width=".9"/></svg>Part Studio 1</button>
  <button class="dtab"><svg viewBox="0 0 12 12"><path d="M.7.700h8L11.300 3v8.300H3L.7 9z" fill="#eee" stroke="#333"/><path d="M1.500 1.500h7v7h-7z" fill="#888" stroke="#444"/></svg>Assembly 1</button>
</footer>

<svg class="pointer" viewBox="0 0 9 13" aria-hidden="true"><path d="M.7.700v10.200l2.400-2.200 1.700 3.500 1.700-.8-1.600-3.400h3.200z" fill="#fff" stroke="#222" stroke-width=".9"/></svg>
</body>
</html>
```
FILE: styles.css
```css
* { box-sizing: border-box; }
body { margin: 0; height: 100vh; padding: 33px 0; background: #000; display: flex; flex-direction: column; font: 10px/14px Roboto, "Liberation Sans", sans-serif; color: #484848; overflow: hidden; }
button { font: inherit; color: inherit; background: none; border: 0; padding: 0; margin: 0; display: flex; align-items: center; justify-content: center; flex: none; white-space: nowrap; }
a { color: inherit; text-decoration: none; display: flex; align-items: center; white-space: nowrap; }
svg { display: block; flex: none; }
h1, h2, ul { margin: 0; padding: 0; list-style: none; font-weight: inherit; font-size: inherit; }
.defs { position: absolute; width: 0; height: 0; }

.browser { flex: none; background: #ccdbf3; border-bottom: 1px solid #aab6c9; font: 9px/14px Roboto, sans-serif; color: #3a4a68; }
.tabstrip { display: flex; align-items: center; height: 21px; background: #83abe9; }
.btab { display: flex; align-items: center; width: 160px; height: 21px; padding: 0 6px 2px 8px; gap: 4px; font-size: 8px; }
.btab:first-child { width: 164px; padding-left: 12px; }
.btab.rule { border-left: 1px solid #4f6fa5; }
.btab.current { background: #ccdbf3; border-radius: 6px 6px 0 0; color: #2c3850; }
.btab-name { flex: 1; justify-content: flex-start; }
.fav { width: 12px; height: 12px; }
.x svg { width: 8px; height: 8px; color: #1d2b45; }
.newtab { width: 30px; height: 14px; border-left: 1px solid #4f6fa5; margin-bottom: 2px; }
.newtab svg { width: 9px; height: 9px; }
.winctl { margin-left: auto; display: flex; gap: 21px; padding: 0 6px 4px 0; }
.winctl svg { width: 10px; height: 10px; fill: none; stroke: #47628f; }
.address { display: flex; align-items: center; height: 24px; padding: 0 10px 0 7px; gap: 10px; }
.address svg { width: 12px; height: 12px; }
.omnibox { flex: 1; display: flex; align-items: center; gap: 10px; height: 19px; margin-left: -1px; padding: 0 4px 0 8px; border-radius: 10px; background: #f0f4fb; }
.omnibox .lock { width: 8px; height: 10px; }
.url { flex: 1; min-width: 0; border: 0; margin-left: -6px; padding: 0 0 0 1px; background: none; outline: 0; font: 9px/14px "Open Sans", "Noto Sans", sans-serif; color: #59616e; }
.profile { width: 15px; height: 15px; border-radius: 50%; background: #c2185b; color: #fff; margin-left: -1px; }
.address .dots svg { width: 4px; height: 12px; fill: #222; }
.bookmarks { display: flex; justify-content: space-between; height: 21px; padding: 0 5px 3px 8px; }
.bookmarks a { gap: 6px; }
.bookmarks svg { width: 10px; height: 10px; }
.bookmarks .reading { font-size: 8px; border-left: 1px solid #9aa9c2; height: 12px; margin-top: 3px; padding-left: 7px; }

.appbar { flex: none; display: flex; align-items: center; height: 27px; padding-left: 1px; background: #f7f8f8; white-space: nowrap; }
.brand { gap: 4px; font: 12px/14px Lato, sans-serif; color: #6a6a6a; width: 72px; }
.brand svg { width: 15px; height: 15px; }
.menu svg, .copy svg, .folder svg, .globe, .stat svg { width: 12px; height: 12px; }
.appbar h1 { margin: 0 5px 0 7px; width: 88px; font: bold 15px/20px Roboto, sans-serif; color: #222; }
.branch { width: 41px; font-size: 11px; padding-top: 2px; color: #888; }
.folder { gap: 3px; margin-left: 12px; width: 99px; font-size: 11px; padding-top: 2px; color: #888; }
.stat { display: flex; align-items: center; gap: 4px; width: 32px; font-size: 11px; }
.globe { margin-right: 16px; }
.account { display: flex; align-items: center; gap: 6px; margin-left: auto; }
.bell { position: relative; width: 16px; height: 20px; margin-right: -3px; justify-content: flex-start; }
.bell svg { width: 14px; height: 15px; }
.bell span { position: absolute; right: 0; top: 0; width: 10px; height: 11px; background: #1650a5; color: #fff; font: bold 8px/11px Roboto, sans-serif; border-radius: 1px; }
.btn { height: 23px; padding: 0 6px; border: 1px solid #d2d3d5; border-radius: 2px; background: #fff; }
.share { padding: 0 7px; background: #174fa9; border-color: #174fa9; color: #fff; font-weight: bold; }
.help { gap: 2px; }
.help svg:first-child { width: 12px; height: 12px; }
.help .car, .user .car { width: 8px; height: 8px; color: #222; }
.user { gap: 3px; font-size: 9px; }
.user svg:first-child { width: 16px; height: 14px; }
.user .car { margin-right: -2px; }

.work { flex: 1; min-height: 0; display: flex; background: #fff; }
.rail { flex: none; display: flex; flex-direction: column; align-items: center; gap: 9px; width: 26px; padding-top: 5px; background: #f8f8f9; border-right: 1px solid #dcdcdc; }
.rail svg { width: 14px; height: 14px; color: #222; }
.main { flex: 1; min-width: 0; display: flex; flex-direction: column; }
.toolbar { flex: none; display: flex; align-items: center; height: 24px; }
.t { width: 23px; height: 20px; }
.t svg { width: 14px; height: 14px; }
.c { width: 11px; height: 20px; }
.c svg { width: 8px; height: 8px; }
.sketch { gap: 3px; width: 60px; height: 18px; border: 0 solid #d9d9d9; border-width: 0 1px; margin-left: 1px; }
.sketch svg { width: 12px; height: 12px; }
.g { display: flex; }
.g + .g { border-left: 1px solid #d9d9d9; padding-left: 1px; }
.varx { font: bold 11px/14px "Liberation Serif", serif; color: #111; }
.search { height: 19px; margin-left: 10px; padding: 0 4px 0 6px; background: #eeeeee; border-radius: 2px; color: #666; }
.search kbd { margin-left: 1px; padding: 0 2px; border: 1px solid #bbb; font: 7px/9px Roboto, sans-serif; }
.search kbd:first-of-type { margin-left: 3px; }

.stage { flex: 1; min-height: 0; display: flex; }
.panel { flex: none; display: flex; flex-direction: column; width: 137px; border: 1px solid #d8d8d8; border-left: 0; background: #fff; font-size: 9px; }
.phead { display: flex; align-items: center; height: 20px; padding: 0 13px 0 2px; gap: 7px; }
.phead h2 { flex: 1; font-weight: 500; }
.phead svg { width: 13px; height: 13px; }
.phead .sw svg { color: #222; }
.filter { display: flex; align-items: center; gap: 8px; padding: 1px 5px 0 6px; }
.filter svg { width: 12px; height: 12px; }
.filter input { flex: 1; min-width: 0; height: 20px; border: 1px solid #c9c9c9; border-radius: 1px; padding: 0 3px; font: italic 9px/14px Roboto, sans-serif; outline: 0; }
.filter input::placeholder { color: #8c8c8c; opacity: 1; }
.row { display: flex; align-items: center; height: 17px; gap: 5px; padding-left: 2px; }
.row svg { width: 8px; height: 8px; color: #333; }
.sub { margin: 0 0 2px 5px; border-left: 1px solid #ccc; }
.sub li { display: flex; align-items: center; gap: 3px; height: 17px; padding-left: 10px; }
.feats li { display: flex; align-items: center; gap: 3px; height: 17px; padding-left: 3px; }
.sub svg, .feats svg { width: 11px; height: 11px; color: #555; }
.feats .off { color: #a2a2a2; }
.feats .off svg { color: #a2a2a2; }
.rollback { height: 5px; margin: 7px 6px 0 3px; background: #b9b9b9; }
.parts { margin-top: auto; height: 181px; margin-right: 3px; border-top: 1px solid #d3d3d3; }
.parts .sub li { padding-left: 8px; }

.canvas { position: relative; flex: 1; min-width: 0; overflow: hidden; background: #fff; }
.scene { width: 100%; height: 100%; }
.planename text { font: 500 12px Roboto, sans-serif; fill: #3a64ad; }
.cubename text { font: 8px Roboto, sans-serif; fill: #333; }
.axis { font: bold 9px Roboto, sans-serif; }
.z { fill: #4b51b5; }
.xx { fill: #c33c42; }
.cube { position: absolute; right: 0; top: 0; width: 120px; height: 120px; }
.toggle { position: absolute; left: 0; top: 242px; width: 22px; height: 23px; background: #fff; border: 1px solid #d0d0d0; border-left: 0; }
.toggle svg { width: 14px; height: 14px; }
.side { position: absolute; right: 0; top: 198px; width: 17px; overflow: hidden; border: 1px solid #d0d0d0; border-width: 1px 0 0 1px; background: #fff; }
.side button { width: 21px; height: 22px; border-bottom: 1px solid #d0d0d0; }
.side svg { width: 14px; height: 14px; }
.measure { position: absolute; right: 2px; bottom: 4px; display: flex; gap: 12px; }
.measure svg { width: 12px; height: 12px; }

.tabs { flex: none; display: flex; height: 19px; background: #cfcfcf; }
.find { width: 26px; background: #f8f8f9; }
.find svg { width: 13px; height: 13px; }
.add { width: 26px; padding-right: 4px; background: #bcbcbc; }
.add svg { width: 10px; height: 10px; }
.dtab { justify-content: flex-start; gap: 2px; width: 134px; padding: 0 7px; margin-right: 1px; background: #dfdfdf; border-bottom: 2px solid #dfdfdf; }
.dtab.on { background: #fff; border-color: #123b80; }
.dtab svg { width: 12px; height: 12px; }
.pointer { position: absolute; left: 80px; top: 607px; width: 9px; height: 13px; }
```
